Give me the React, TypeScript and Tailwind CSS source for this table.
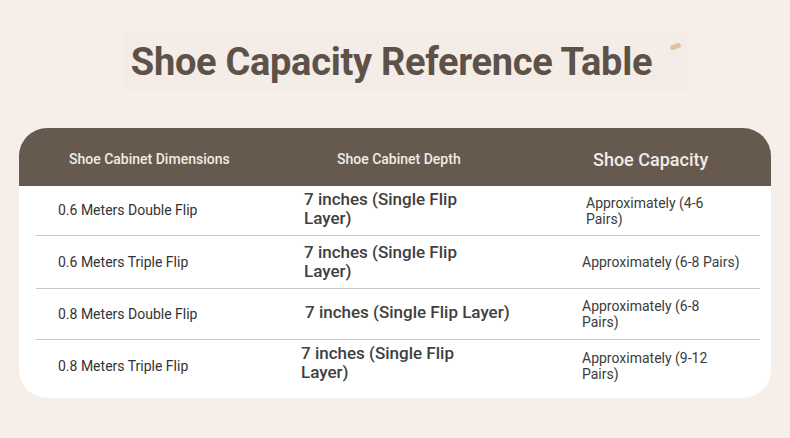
import React from 'react';

type Row = {
  size: string;
  depth: string;
  depthW: string;
  capacity: string;
  capW: string;
  h: string;
  extra: string;
  depthShift: string;
};

const rows: Row[] = [
  { size: '0.6 Meters Double Flip', depth: '7 inches (Single Flip Layer)', depthW: 'w-[170px]', capacity: 'Approximately (4-6 Pairs)', capW: 'w-[130px] pl-[4px]', h: 'h-[50px]', extra: '', depthShift: '-mt-[3px]' },
  { size: '0.6 Meters Triple Flip', depth: '7 inches (Single Flip Layer)', depthW: 'w-[170px]', capacity: 'Approximately (6-8 Pairs)', capW: 'w-[175px]', h: 'h-[53px]', extra: '', depthShift: '' },
  { size: '0.8 Meters Double Flip', depth: '7 inches (Single Flip Layer)', depthW: 'w-[220px] pl-[1px]', capacity: 'Approximately (6-8 Pairs)', capW: 'w-[130px]', h: 'h-[51px]', extra: '', depthShift: '-mt-[3px]' },
  { size: '0.8 Meters Triple Flip', depth: '7 inches (Single Flip Layer)', depthW: 'w-[170px] -ml-[3px]', capacity: 'Approximately (9-12 Pairs)', capW: 'w-[135px]', h: 'h-[58px]', extra: 'pb-[6px]', depthShift: '-mt-[6px]' },
];

export default function App() {
  return (
    <div className="w-[790px] h-[438px] bg-[#f5eee9] flex flex-col items-center font-['Roboto',sans-serif] overflow-hidden">
      <div className="mt-[30px] h-[62px] ml-[20px] pl-[8px] pr-[6px] flex items-center gap-[18px] bg-[#f4ece7]">
        <h1 className="text-[38px] font-bold text-[#5e5148] tracking-[-0.3px] leading-none pt-[2px]">Shoe Capacity Reference Table</h1>
        <span className="self-start mt-[14px] w-[11px] h-[5px] rounded-full bg-[#d8b88c] rotate-[-20deg] opacity-80" />
      </div>

      <div className="mt-[36px] w-[752px] bg-white rounded-[28px] overflow-hidden">
        <div className="h-[58px] pt-[5px] bg-[#665a4f] grid grid-cols-[285px_268px_1fr] items-center text-[#f2ebe4]">
          <div className="pl-[50px] text-[14px] font-medium">Shoe Cabinet Dimensions</div>
          <div className="pl-[33px] text-[14px] font-medium">Shoe Cabinet Depth</div>
          <div className="pl-[21px] text-[18px] font-medium">Shoe Capacity</div>
        </div>
        <div className="ml-[17px] mr-[11px]">
          {rows.map((r, i) => (
            <div
              key={r.size}
              className={`grid grid-cols-[268px_278px_1fr] items-center ${r.h} ${r.extra} ${i < rows.length - 1 ? 'border-b border-[#c9c9c9]' : ''}`}
            >
              <div className="pl-[22px] text-[14px] font-normal text-[#333333]">{r.size}</div>
              <div className={`${r.depthW} ${r.depthShift} text-[17px] font-medium text-[#404040] leading-[19px]`}>{r.depth}</div>
              <div className={`${r.capW} text-[14px] font-normal text-[#3c3c3c] leading-[16px]`}>{r.capacity}</div>
            </div>
          ))}
        </div>
      </div>
    </div>
  );
}
